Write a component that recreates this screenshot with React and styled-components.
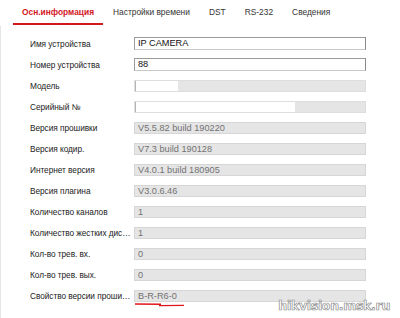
import React from 'react';
import styled, { createGlobalStyle } from 'styled-components';

const GlobalStyle = createGlobalStyle`
  html, body {
    margin: 0;
    padding: 0;
    background: #ffffff;
  }
  body {
    font-family: 'Liberation Sans', Arial, sans-serif;
  }
`;

const tabs = ['Осн.информация', 'Настройки времени', 'DST', 'RS-232', 'Сведения'];

const rows = [
  { label: 'Имя устройства', value: 'IP CAMERA', kind: 'edit' },
  { label: 'Номер устройства', value: '88', kind: 'edit' },
  { label: 'Модель', value: '', kind: 'split', white: 43 },
  { label: 'Серийный №', value: '', kind: 'split', white: 160 },
  { label: 'Версия прошивки', value: 'V5.5.82 build 190220' },
  { label: 'Версия кодир.', value: 'V7.3 build 190128' },
  { label: 'Интернет версия', value: 'V4.0.1 build 180905' },
  { label: 'Версия плагина', value: 'V3.0.6.46' },
  { label: 'Количество каналов', value: '1' },
  { label: 'Количество жестких дисков', value: '1' },
  { label: 'Кол-во трев. вх.', value: '0' },
  { label: 'Кол-во трев. вых.', value: '0' },
  { label: 'Свойство версии прошивки', value: 'B-R-R6-0', marked: true },
];

const App = () => {
  return (
    <Page>
      <GlobalStyle />
      <TabBar>
        {tabs.map((t, i) => (
          <Tab key={t} active={i === 0}>
            {t}
          </Tab>
        ))}
      </TabBar>

      <Panel>
        {rows.map((row) => (
          <Row key={row.label}>
            <Label>{row.label}</Label>
            {row.kind === 'edit' && <EditField>{row.value}</EditField>}
            {row.kind === 'split' && (
              <SplitField>
                <SplitWhite style={{ width: row.white }} />
              </SplitField>
            )}
            {!row.kind && (
              <ReadField>
                {row.value}
                {row.marked && (
                  <Marker width="52" height="6" viewBox="0 0 52 6">
                    <path d="M1 2 L27 2.2" stroke="#e0141c" strokeWidth="1.4" fill="none" />
                    <path d="M25 3.6 L50 3.4" stroke="#e0141c" strokeWidth="1.4" fill="none" />
                  </Marker>
                )}
              </ReadField>
            )}
          </Row>
        ))}
      </Panel>

      <Watermark>hikvision.msk.ru</Watermark>
    </Page>
  );
};

export default App;

const Page = styled.div`
  position: relative;
  width: 400px;
  height: 318px;
  overflow: hidden;
  background: #fff;
`;

const TabBar = styled.div`
  display: flex;
  padding-left: 13px;
  height: 26px;
`;

const Tab = styled.div`
  display: flex;
  align-items: center;
  height: 23px;
  padding: 0 9px;
  margin-right: 1px;
  font-size: 8.4px;
  font-weight: ${(p) => (p.active ? 'bold' : 'normal')};
  color: ${(p) => (p.active ? '#d3171f' : '#333333')};
  border-bottom: 2px solid ${(p) => (p.active ? '#d3171f' : 'transparent')};
  white-space: nowrap;
`;

const Panel = styled.div`
  border-left: 1px solid #e6e6e6;
  padding-top: 7px;
  height: 292px;
  box-sizing: border-box;
`;

const Row = styled.div`
  display: grid;
  grid-template-columns: 101px 232px;
  column-gap: 3px;
  align-items: center;
  height: 21px;
  padding-left: 29px;
`;

const Label = styled.div`
  font-size: 8.3px;
  letter-spacing: -0.05px;
  color: #222222;
  white-space: nowrap;
  overflow: hidden;
  text-overflow: ellipsis;
`;

const FieldBase = styled.div`
  position: relative;
  box-sizing: border-box;
  height: 12px;
  font-size: 9.2px;
  line-height: 10px;
  padding-left: 3px;
  white-space: nowrap;
`;

const EditField = styled(FieldBase)`
  height: 13px;
  line-height: 11px;
  background: #fff;
  color: #111;
  border: 1px solid #9a9a9a;
  border-right-color: #8a8a8a;
  border-bottom-color: #c8c8c8;
`;

const ReadField = styled(FieldBase)`
  background: #e5e5e5;
  color: #727272;
  border: 1px solid #d6d6d6;
`;

const SplitField = styled(FieldBase)`
  background: #e5e5e5;
  border: 1px solid #dedede;
  padding-left: 0;
`;

const SplitWhite = styled.div`
  height: 100%;
  background: #fff;
  border-left: 1px solid #b5b5b5;
  box-sizing: border-box;
`;

const Marker = styled.svg`
  position: absolute;
  left: -1px;
  top: 11px;
`;

const Watermark = styled.div`
  position: absolute;
  right: 10px;
  bottom: 5px;
  font-family: 'DejaVu Sans', sans-serif;
  font-size: 12.5px;
  font-weight: bold;
  letter-spacing: -0.3px;
  color: #ffffff;
  -webkit-text-stroke: 0.7px #8c8c8c;
`;
